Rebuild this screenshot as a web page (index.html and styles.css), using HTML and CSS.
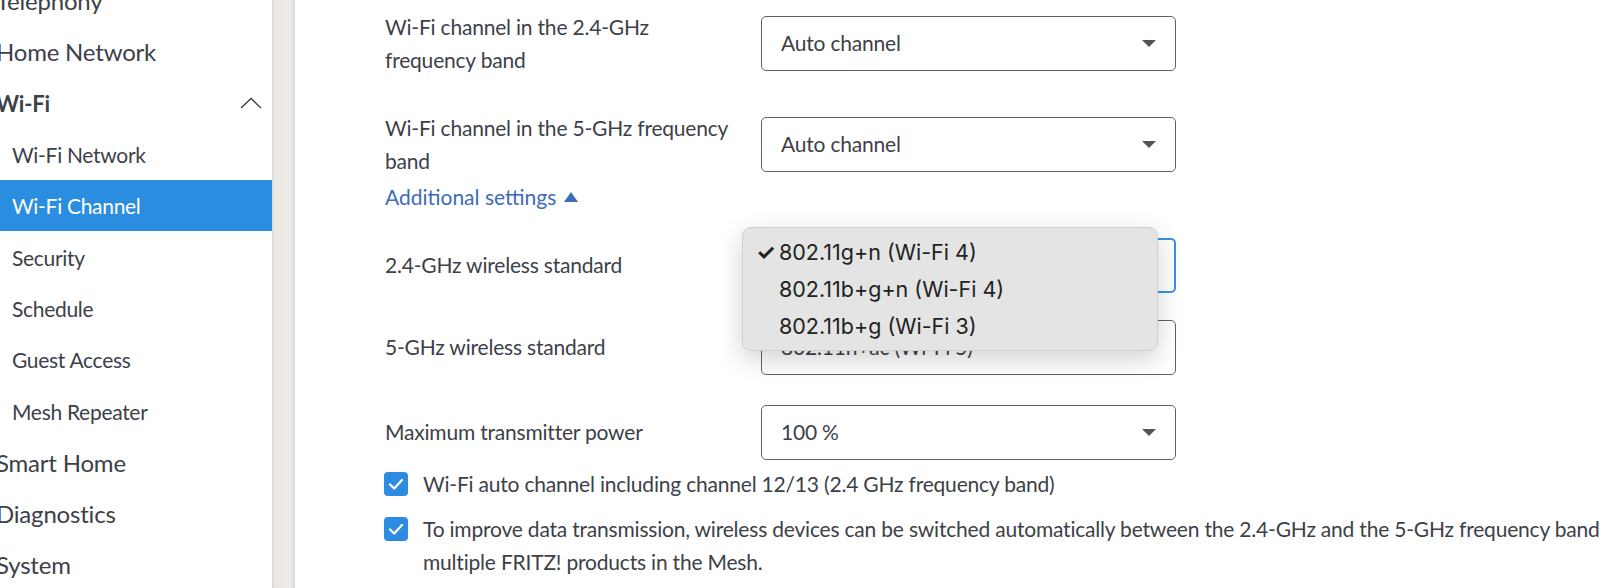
FILE: index.html
```html
<!DOCTYPE html>
<html lang="en">
<head>
    <meta charset="UTF-8">
    <meta name="viewport" content="width=device-width, initial-scale=1.0">
    <title>Wi-Fi Channel</title>
    <link rel="stylesheet" href="styles.css">
</head>
<body>
    <nav class="sidebar">
        <ul class="menu">
            <li class="menu-item">Telephony</li>
            <li class="menu-item">Home Network</li>
            <li class="menu-item open">
                <span>Wi-Fi</span>
                <svg class="chevron" width="22" height="12" viewBox="0 0 22 12"><path d="M1 11 L11 1.5 L21 11" fill="none" stroke="#3c4148" stroke-width="1.4"/></svg>
            </li>
            <li class="menu-item sub">Wi-Fi Network</li>
            <li class="menu-item sub active">Wi-Fi Channel</li>
            <li class="menu-item sub">Security</li>
            <li class="menu-item sub">Schedule</li>
            <li class="menu-item sub">Guest Access</li>
            <li class="menu-item sub">Mesh Repeater</li>
            <li class="menu-item">Smart Home</li>
            <li class="menu-item">Diagnostics</li>
            <li class="menu-item">System</li>
        </ul>
    </nav>
    <div class="scroll-strip"></div>

    <main class="content">
        <div class="form-row first">
            <label class="form-label">Wi-Fi channel in the 2.4-GHz frequency band</label>
            <div class="select"><span>Auto channel</span><span class="select-arrow"></span></div>
        </div>
        <div class="form-row">
            <label class="form-label">Wi-Fi channel in the 5-GHz frequency band</label>
            <div class="select"><span>Auto channel</span><span class="select-arrow"></span></div>
        </div>
        <a class="more-link" href="#">Additional settings <span class="more-arrow"></span></a>

        <div class="form-row single near">
            <label class="form-label">2.4-GHz wireless standard</label>
            <div class="select focused">
                <span>802.11g+n (Wi-Fi 4)</span><span class="select-arrow"></span>
                <ul class="popup">
                    <li class="popup-item"><span class="tick">✓</span>802.11g+n (Wi-Fi 4)</li>
                    <li class="popup-item"><span class="tick"></span>802.11b+g+n (Wi-Fi 4)</li>
                    <li class="popup-item"><span class="tick"></span>802.11b+g (Wi-Fi 3)</li>
                </ul>
            </div>
        </div>
        <div class="form-row single">
            <label class="form-label">5-GHz wireless standard</label>
            <div class="select"><span>802.11n+ac (Wi-Fi 5)</span><span class="select-arrow"></span></div>
        </div>
        <div class="form-row single far">
            <label class="form-label">Maximum transmitter power</label>
            <div class="select"><span>100 %</span><span class="select-arrow"></span></div>
        </div>

        <div class="check-row">
            <span class="checkbox"><svg width="24" height="24" viewBox="0 0 24 24"><path d="M6 12.5 L10.2 16.5 L18 8" fill="none" stroke="#fff" stroke-width="2.2" stroke-linecap="round" stroke-linejoin="round"/></svg></span>
            <p class="check-text">Wi-Fi auto channel including channel 12/13 (2.4 GHz frequency band)</p>
        </div>
        <div class="check-row second">
            <span class="checkbox"><svg width="24" height="24" viewBox="0 0 24 24"><path d="M6 12.5 L10.2 16.5 L18 8" fill="none" stroke="#fff" stroke-width="2.2" stroke-linecap="round" stroke-linejoin="round"/></svg></span>
            <p class="check-text">To improve data transmission, wireless devices can be switched automatically between the 2.4-GHz and the 5-GHz frequency band and between multiple FRITZ! products in the Mesh.</p>
        </div>
    </main>
</body>
</html>
```

FILE: styles.css
```css
html, body {
    margin: 0;
    height: 100%;
    overflow: hidden;
}
body {
    display: flex;
    width: 1600px;
    font-family: 'Source Sans Pro', Lato, sans-serif;
    color: #3c4148;
    background-color: #fff;
}
.sidebar {
    width: 272px;
    flex: none;
    overflow: hidden;
    background-color: #fff;
}
.menu {
    list-style: none;
    margin: -25px 0 0 -4px;
    padding: 0;
}
.menu-item {
    height: 51.3px;
    display: flex;
    align-items: center;
    font-size: 24px;
    letter-spacing: -0.2px;
}
.menu-item.open {
    font-size: 22px;
    font-weight: 700;
    justify-content: space-between;
    padding-right: 10px;
}
.menu-item.sub {
    font-size: 21px;
    letter-spacing: -0.3px;
    padding-left: 16px;
}
.menu-item.active {
    background-color: #2a8de0;
    color: #fff;
}
.scroll-strip {
    width: 23px;
    flex: none;
    background: linear-gradient(to right, #d8d4ce, #ebe8e3 12%, #eeebe6 80%, #dbd7d1);
}
.content {
    flex: none;
    width: 1400px;
    padding: 11px 0 0 90px;
    font-size: 21px;
    letter-spacing: -0.2px;
    line-height: 32.5px;
}
.form-row {
    display: flex;
    align-items: center;
    margin-top: 36px;
}
.form-row.first {
    margin-top: 0;
}
.form-row.single {
    margin-top: 27px;
}
.form-row.near {
    margin-top: 24px;
}
.form-row.far {
    margin-top: 30px;
}
.form-label {
    width: 350px;
    padding-right: 26px;
    flex: none;
}
.select {
    position: relative;
    width: 415px;
    height: 55px;
    box-sizing: border-box;
    border: 1px solid #5d6269;
    border-radius: 5px;
    display: flex;
    align-items: center;
    justify-content: space-between;
    padding: 0 19px 0 19px;
    color: #3c4148;
}
.select.focused {
    border: 2px solid #3a8fe3;
}
.select-arrow {
    width: 0;
    height: 0;
    border-left: 7px solid transparent;
    border-right: 7px solid transparent;
    border-top: 7px solid #50555c;
}
.more-link {
    display: inline-block;
    margin-top: 4px;
    color: #3d6cb4;
    letter-spacing: 0;
    text-decoration: none;
}
.more-arrow {
    display: inline-block;
    width: 0;
    height: 0;
    margin-left: 2px;
    border-left: 7px solid transparent;
    border-right: 7px solid transparent;
    border-bottom: 10px solid #3d6cb4;
    vertical-align: 3px;
}
.popup {
    position: absolute;
    z-index: 10;
    left: -21px;
    top: -13px;
    width: 416px;
    height: 124px;
    box-sizing: border-box;
    margin: 0;
    padding: 6px 0 0 0;
    list-style: none;
    background-color: #e3e4e3;
    border: 1px solid #cfd0cf;
    border-radius: 9px;
    box-shadow: 0 8px 26px rgba(0, 0, 0, 0.18);
    font-family: Inter, 'Liberation Sans', sans-serif;
    font-size: 21.5px;
    letter-spacing: 0;
    color: #222;
}
.popup-item {
    height: 37px;
    display: flex;
    align-items: center;
}
.tick {
    width: 23px;
    padding-left: 13px;
    font-size: 22px;
    font-weight: 700;
}
.check-row {
    display: flex;
    align-items: flex-start;
    margin-top: 8px;
}
.check-row.second {
    margin-top: 13px;
}
.checkbox {
    width: 24px;
    height: 24px;
    flex: none;
    margin: 4px 15px 0 -1px;
    border-radius: 4px;
    background-color: #2d8ce0;
}
.checkbox svg {
    display: block;
}
.check-text {
    margin: 0;
    width: 1345px;
}
```
